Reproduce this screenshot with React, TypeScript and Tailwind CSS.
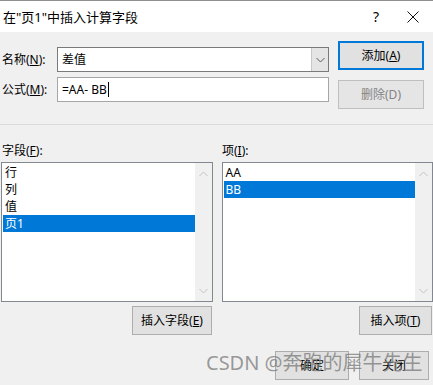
import React from "react";

const font = "font-['Noto_Sans','Noto_Sans_CJK_SC',sans-serif]";

function Btn({
  children,
  className = "",
  disabled = false,
  primary = false,
}: {
  children: React.ReactNode;
  className?: string;
  disabled?: boolean;
  primary?: boolean;
}) {
  return (
    <div
      className={`h-[29px] flex items-center justify-center text-[12px] leading-[14px] bg-[#e1e1e1] ${
        primary ? "border-2 border-[#0078d7]" : "border border-[#adadad]"
      } ${disabled ? "text-[#838383] bg-[#e5e5e5] border-[#bfbfbf]" : "text-black"} ${className}`}
    >
      {children}
    </div>
  );
}

function Chevron({ up, color }: { up?: boolean; color: string }) {
  return (
    <svg width="9" height="6" viewBox="0 0 9 6">
      <path
        d={up ? "M0.5 5 L4.5 1 L8.5 5" : "M0.5 1 L4.5 5 L8.5 1"}
        fill="none"
        stroke={color}
        strokeWidth="1"
      />
    </svg>
  );
}

function ListBox({
  items,
  selected,
  className = "",
}: {
  items: string[];
  selected: number;
  className?: string;
}) {
  return (
    <div className={`h-[140px] w-[212px] border border-[#828790] bg-white flex ${className}`}>
      <div className="flex-1 pl-[1px] pt-[1px] flex flex-col">
        {items.map((it, i) => (
          <div
            key={it}
            className={`h-[17px] flex items-center pl-[2px] text-[12px] leading-[14px] ${
              i === selected ? "bg-[#0078d7] text-white" : "text-black"
            }`}
          >
            {it}
          </div>
        ))}
      </div>
      <div className="w-[17px] bg-[#f0f0f0] flex flex-col items-center justify-between pt-[8px] pb-[7px]">
        <Chevron up color="#c2c2c2" />
        <Chevron color="#c2c2c2" />
      </div>
    </div>
  );
}

export default function App() {
  return (
    <div className={`w-[433px] h-[385px] overflow-hidden bg-[#f0f0f0] flex flex-col relative ${font}`}>
      <div className="h-[1px] bg-[#8f8f8f]" />
      <div className="h-[31px] bg-white flex items-center text-black">
        <div className="flex-1 pl-[3px] text-[13px] leading-[16px]">在"页1"中插入计算字段</div>
        <div className="w-[14px] text-center text-[14px] leading-[16px] mr-[24px]">?</div>
        <svg width="12" height="12" viewBox="0 0 12 12" className="mr-[14px]">
          <path d="M0.5 0.5 L11.5 11.5 M11.5 0.5 L0.5 11.5" stroke="#111" strokeWidth="1" />
        </svg>
      </div>

      {/* name / formula + buttons */}
      <div className="mt-[9px] flex">
        <div className="w-[329px] pt-[6px] flex flex-col gap-[5px]">
          <div className="flex items-center h-[25px]">
            <div className="w-[57px] pl-[2px] text-[12px] leading-[14px]">
              名称(<span className="underline">N</span>):
            </div>
            <div className="w-[272px] h-[25px] border border-[#7a7a7a] bg-white flex">
              <div className="flex-1 flex items-center pl-[4px] text-[12px] leading-[14px]">差值</div>
              <div className="w-[17px] bg-[#e5e5e5] border-l border-[#c8c8c8] flex items-center justify-center">
                <Chevron color="#5a5a5a" />
              </div>
            </div>
          </div>
          <div className="flex items-center h-[25px]">
            <div className="w-[57px] pl-[2px] text-[12px] leading-[14px]">
              公式(<span className="underline">M</span>):
            </div>
            <div className="w-[272px] h-[25px] border border-[#a6a6a6] bg-white flex items-center pl-[4px] text-[12px] leading-[14px]">
              =AA- BB
              <span className="w-px h-[15px] bg-black ml-[1px]" />
            </div>
          </div>
        </div>
        <div className="ml-[9px] flex flex-col gap-[10px]">
          <Btn primary className="w-[86px]">
            添加(<span className="underline">A</span>)
          </Btn>
          <Btn disabled className="w-[86px]">
            删除(D)
          </Btn>
        </div>
      </div>

      <div className="mt-[15px] h-px bg-[#dadada]" />

      {/* field / item labels */}
      <div className="mt-[19px] flex text-[12px] leading-[14px] h-[14px]">
        <div className="w-[222px] pl-[2px]">
          字段(<span className="underline">F</span>):
        </div>
        <div>
          项(<span className="underline">I</span>):
        </div>
      </div>

      <div className="mt-[4px] flex">
        <ListBox items={["行", "列", "值", "页1"]} selected={3} className="ml-[1px]" />
        <ListBox items={["AA", "BB"]} selected={1} className="ml-[9px]" />
      </div>

      <div className="mt-[4px] flex">
        <Btn className="ml-[132px] w-[80px]">
          插入字段(<span className="underline">E</span>)
        </Btn>
        <Btn className="ml-[147px] w-[73px]">
          插入项(<span className="underline">T</span>)
        </Btn>
      </div>

      <div className="mt-[16px] flex">
        <Btn className="ml-[275px] w-[74px]">确定</Btn>
        <Btn className="ml-[10px] w-[70px]">关闭</Btn>
      </div>

      <div className="absolute left-[206px] top-[351px] text-[20px] leading-[24px] text-[#7a7a7a]/75 whitespace-nowrap pointer-events-none">
        CSDN @奔跑的犀牛先生
      </div>
    </div>
  );
}
